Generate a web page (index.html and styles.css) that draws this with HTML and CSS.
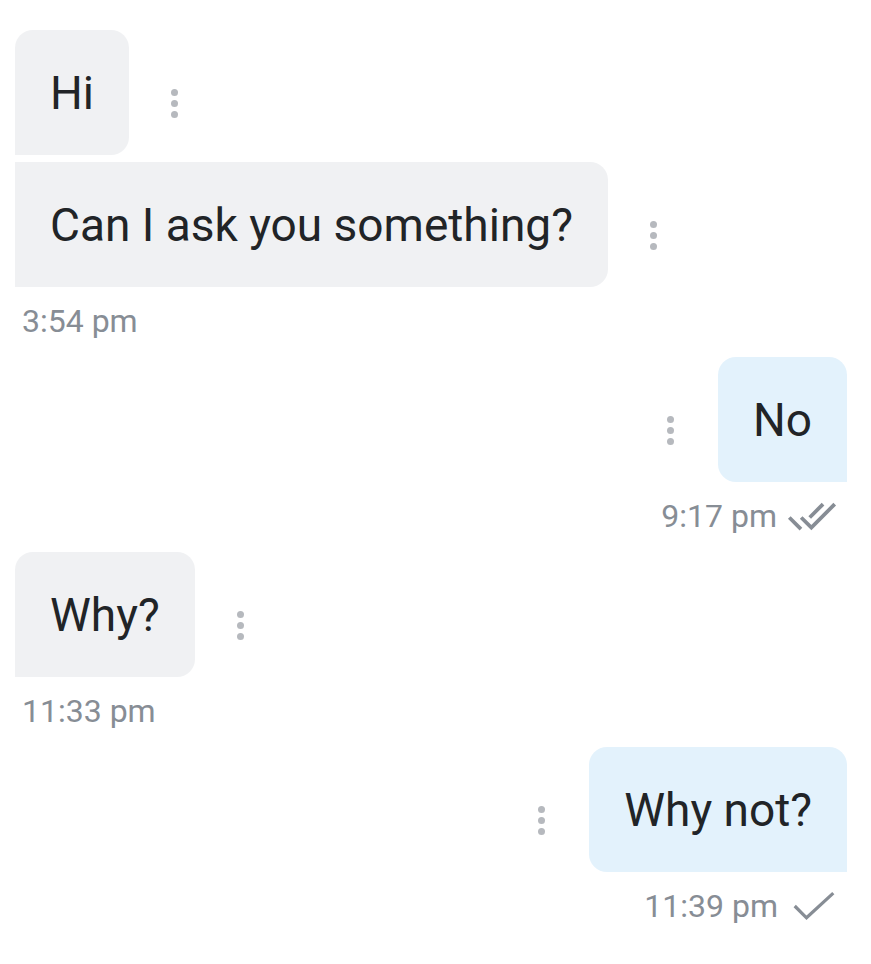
FILE: index.html
```html
<!DOCTYPE html>
<html lang="en">

<head>
    <meta charset="UTF-8">
    <title>Chat</title>
    <meta name="viewport" content="width=device-width, initial-scale=1.0" />
    <link rel="stylesheet" href="styles.css">
</head>

<body>
    <div class="chat">
        <!-- incoming -->
        <div class="group in">
            <div class="row">
                <div class="bubble first">Hi</div>
                <span class="more"><i></i><i></i><i></i></span>
            </div>
            <div class="row">
                <div class="bubble">Can I ask you something?</div>
                <span class="more"><i></i><i></i><i></i></span>
            </div>
            <div class="time">3:54 pm</div>
        </div>

        <!-- outgoing -->
        <div class="group out">
            <div class="row">
                <span class="more"><i></i><i></i><i></i></span>
                <div class="bubble first">No</div>
            </div>
            <div class="time">9:17 pm
                <svg class="tick double" viewBox="0 4 24 16">
                    <path d="M1.1 12.7L6.7 18.3M10.9 12.7L17.3 6.3M6.8 12.7L11.7 17.6L22.9 6.3" />
                </svg>
            </div>
        </div>

        <div class="group in">
            <div class="row">
                <div class="bubble first">Why?</div>
                <span class="more"><i></i><i></i><i></i></span>
            </div>
            <div class="time">11:33 pm</div>
        </div>

        <div class="group out">
            <div class="row">
                <span class="more"><i></i><i></i><i></i></span>
                <div class="bubble first">Why not?</div>
            </div>
            <div class="time">11:39 pm
                <svg class="tick" viewBox="0 0 40 28">
                    <path d="M2 14L13 25L38 2" />
                </svg>
            </div>
        </div>
    </div>
</body>

</html>
```

FILE: styles.css
```css
* {
    margin: 0;
    padding: 0;
    box-sizing: border-box;
}

body {
    font-family: Roboto, "Liberation Sans", sans-serif;
    background: #fff;
    color: #212427;
}

.chat {
    padding: 30px 24px 0 15px;
}

.group {
    display: flex;
    flex-direction: column;
    gap: 7px;
}

.group.in {
    align-items: flex-start;
}

.group.out {
    align-items: flex-end;
}

.row {
    display: flex;
    align-items: center;
}

.bubble {
    font-size: 46px;
    line-height: 54px;
    padding: 36px 35px 35px;
    background: #f0f1f3;
    border-radius: 0 18px 18px 0;
    white-space: nowrap;
}

.in .bubble.first {
    border-radius: 18px 18px 18px 0;
}

.out .bubble {
    background: #e3f2fc;
    border-radius: 18px 18px 0 18px;
}

.more {
    display: flex;
    flex-direction: column;
    gap: 4px;
    margin-top: 22px;
}

.in .more {
    margin-left: 42px;
}

.out .more {
    margin-right: 44px;
}

.more i {
    display: block;
    width: 7px;
    height: 7px;
    border-radius: 50%;
    background: #b6b9be;
}

.time {
    display: flex;
    align-items: center;
    height: 36px;
    font-size: 32px;
    line-height: 36px;
    color: #878d95;
    margin: 9px 0 18px;
    padding-left: 7px;
}

.out .time {
    padding: 0 10px 0 0;
}

.tick {
    margin-left: 13px;
    width: 46px;
    height: 30px;
    fill: none;
    stroke: #878d95;
    stroke-width: 3;
}

.tick.double {
    margin-left: 10px;
    width: 50px;
    height: 34px;
    stroke-width: 1.8;
}
```
